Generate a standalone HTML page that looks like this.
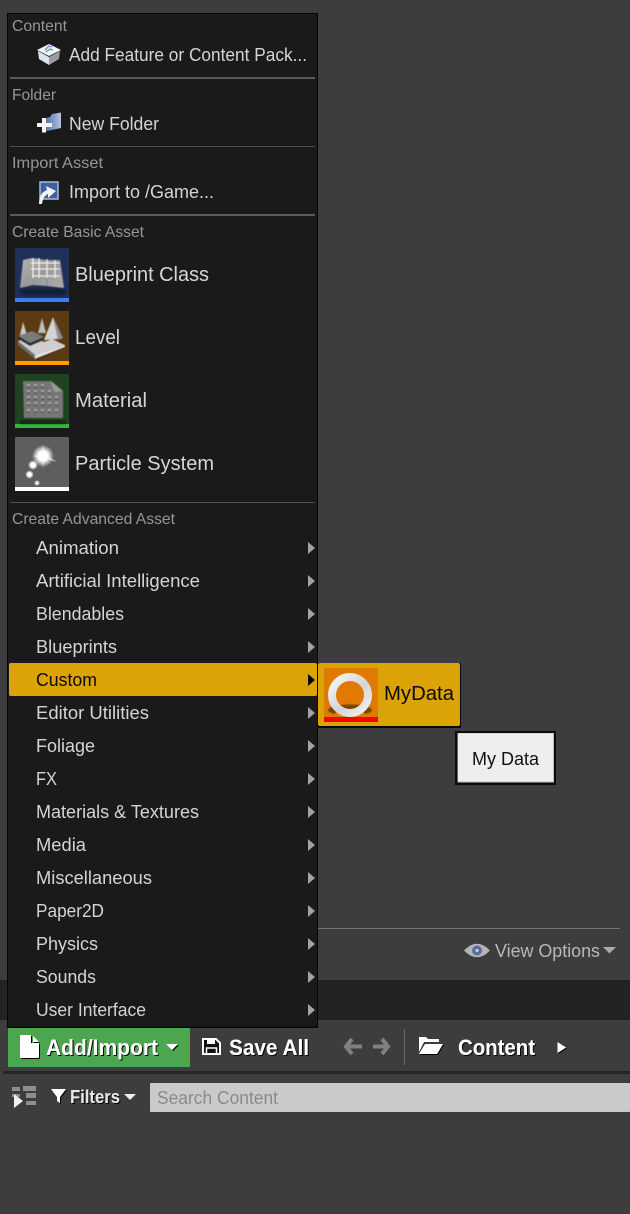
<!DOCTYPE html>
<html><head><meta charset="utf-8"><style>
html,body{margin:0;padding:0;background:#3d3d3d;width:630px;height:1214px;overflow:hidden}
svg{display:block}
text{font-family:"Liberation Sans",sans-serif}
.h{font-size:16px;fill:#969696}
.m{font-size:18.500px;fill:#d4d4d4}
.l{font-size:20.500px;fill:#d6d6d6}
.b{font-size:22px;font-weight:700;fill:#fff}
</style></head><body>
<svg width="630" height="1214" viewBox="0 0 630 1214" xmlns="http://www.w3.org/2000/svg">
<defs>
<linearGradient id="ring" x1="0" y1="0" x2="1" y2="1"><stop offset="0" stop-color="#f7f7f7"/><stop offset=".55" stop-color="#d4d4d8"/><stop offset="1" stop-color="#f2f2f2"/></linearGradient>
<radialGradient id="spark"><stop offset="0" stop-color="#fff"/><stop offset=".45" stop-color="#fff"/><stop offset="1" stop-color="#fff" stop-opacity="0"/></radialGradient>
<linearGradient id="bp" x1="0" y1="0" x2="1" y2="1"><stop offset="0" stop-color="#b4b4b4"/><stop offset=".5" stop-color="#999"/><stop offset="1" stop-color="#aeaeae"/></linearGradient>
<linearGradient id="fold" x1="0" y1="0" x2="1" y2="0"><stop offset="0" stop-color="#3f5f9e"/><stop offset="1" stop-color="#b4c2e4"/></linearGradient>
<filter id="bl" x="-30%" y="-30%" width="160%" height="160%"><feGaussianBlur stdDeviation="1.500"/></filter>
<filter id="s5" x="-20%" y="-20%" width="140%" height="140%"><feGaussianBlur stdDeviation=".5"/></filter>
<filter id="s3" x="-20%" y="-20%" width="140%" height="140%"><feGaussianBlur stdDeviation=".35"/></filter>
<filter id="sh" x="-5%" y="-20%" width="110%" height="140%"><feDropShadow dx="1" dy="1" stdDeviation="0" flood-color="#000"/></filter>
</defs>

<rect width="630" height="1214" fill="#3d3d3d"/>
<rect x="318" y="928" width="302" height="1" fill="#747474"/>
<rect x="0" y="980" width="630" height="40" fill="#232323"/>
<rect x="3" y="1071" width="627" height="3" fill="#252525"/>

<!-- View options -->
<path d="M464 950.500 Q477 937 490 950.500 Q477 964 464 950.500Z" fill="#b5b5b5" filter="url(#s3)"/>
<circle cx="477" cy="950.500" r="5" fill="#5a6f9e"/><circle cx="477" cy="950.500" r="1.500" fill="#cfd6e6"/>
<text x="495" y="957" class="m" style="fill:#b8b8b8" textLength="105" lengthAdjust="spacingAndGlyphs">View Options</text>
<path d="M603 947H616L609.500 953.500Z" fill="#aaa"/>

<!-- Menu -->
<rect x="7" y="13" width="311" height="1015" fill="#050505"/>
<rect x="8" y="14" width="309" height="1012.500" fill="#1a1a1a"/>
<rect x="10" y="77" width="305" height="2" fill="#5a5a5a"/>
<rect x="10" y="146" width="305" height="1" fill="#505050"/>
<rect x="10" y="214" width="305" height="2" fill="#5a5a5a"/>
<rect x="10" y="502" width="305" height="1" fill="#505050"/>

<text x="12" y="31" class="h" textLength="55" lengthAdjust="spacingAndGlyphs">Content</text>
<text x="12" y="100" class="h" textLength="44" lengthAdjust="spacingAndGlyphs">Folder</text>
<text x="12" y="168" class="h" textLength="91" lengthAdjust="spacingAndGlyphs">Import Asset</text>
<text x="12" y="237" class="h" textLength="132" lengthAdjust="spacingAndGlyphs">Create Basic Asset</text>
<text x="12" y="524" class="h" textLength="163" lengthAdjust="spacingAndGlyphs">Create Advanced Asset</text>

<text x="69" y="61" class="m" textLength="238" lengthAdjust="spacingAndGlyphs">Add Feature or Content Pack...</text>
<text x="69" y="130" class="m" textLength="90" lengthAdjust="spacingAndGlyphs">New Folder</text>
<text x="69" y="198" class="m" textLength="145" lengthAdjust="spacingAndGlyphs">Import to /Game...</text>

<!-- cube icon -->
<g filter="url(#s3)">
<path d="M37 50L49 44L61 50L49 56Z" fill="#f2f4f8"/>
<path d="M38 51L49 57V65L39 59Z" fill="#dfe2e8"/>
<path d="M60 51L49 57V65L59 59Z" fill="#9b9da2"/>
<path d="M45 50L49 46L52 47M46 52L50 49L53 50" stroke="#5f8fd4" stroke-width="1.300" fill="none"/>
</g>
<!-- folder icon -->
<g filter="url(#s3)">
<path d="M42 119L50 117L52 114L61 112.500V128L47 131H42Z" fill="url(#fold)"/>
</g>
<path d="M37 123H42V118H46V123H52V127H46V132.500H42V127H37Z" fill="#f4f4f4" filter="url(#s3)"/>
<!-- import icon -->
<g filter="url(#s3)">
<rect x="40" y="182" width="18" height="17" fill="#3f5f9e" stroke="#a9b8d8" stroke-width="1.500"/>
<path d="M39 204Q39 193 47 190L46 186L56 191L48 198L48 194Q43 196 42 204Z" fill="#f2f2f2"/>
</g>

<!-- Blueprint -->
<rect x="15" y="248" width="54" height="50" fill="#1f3158"/>
<rect x="15" y="298" width="54" height="4" fill="#3f7de8"/>
<path d="M19 289H66V295H24Z" fill="#0a1428" opacity=".8" filter="url(#bl)"/>
<g filter="url(#s5)">
<path d="M20 288L23 260L32 258L46 260L60 260L64 288L47 286L33 285Z" fill="url(#bp)"/>
<path d="M47 278L47 286" stroke="#808080" stroke-width="1"/>
<path d="M31 263L60 263M31 269L60 269M32 276L60 276M33 258V278M39 258V278M47 259V278M55 260V278" stroke="#f4f4f4" stroke-width="1.100" fill="none"/>
</g>
<!-- Level -->
<rect x="15" y="311" width="54" height="50" fill="#5a3b13"/>
<rect x="15" y="361" width="54" height="4" fill="#ff9c00"/>
<path d="M30 352L37 360L67 346L60 342Z" fill="#1a1206" opacity=".7" filter="url(#s5)"/>
<g filter="url(#s5)">
<path d="M23 322L20 335H27Z" fill="#c8c8c8"/>
<path d="M42 318L38 333H46Z" fill="#bdbdbd"/>
<path d="M53 317L44 340L58 339Z" fill="#d4d4d4"/>
<path d="M53 317L63 338L58 340Z" fill="#8f8f8f"/>
<path d="M18 341L35 355L65 345L52 339L44 342L32 336Z" fill="#cfcfcf"/>
<path d="M18 341L35 355V359L18 345Z" fill="#6d6d6d"/>
<path d="M35 355L65 345V347L35 359Z" fill="#e2e2e2"/>
<path d="M18 336L32 331L44 337L30 343Z" fill="#7a7a7a"/>
<path d="M18 336L30 343L44 337V340L30 346L18 339Z" fill="#262626"/>
</g>
<!-- Material -->
<rect x="15" y="374" width="54" height="50" fill="#1f4220"/>
<rect x="15" y="424" width="54" height="4" fill="#34b739"/>
<rect x="20" y="420" width="46" height="4" fill="#152b16" filter="url(#s5)"/>
<g filter="url(#s5)">
<path d="M23 381H51L63 391V418H24Z" fill="#767676"/>
<path d="M51 381L63 391L54 392Z" fill="#9a9a9a"/>
<g fill="#a4a4a4">
<rect x="27" y="384" width="3" height="2"/><rect x="34" y="384" width="3" height="2"/><rect x="41" y="384" width="3" height="2"/>
<rect x="27" y="390" width="3" height="2"/><rect x="34" y="390" width="3" height="2"/><rect x="41" y="390" width="3" height="2"/><rect x="48" y="390" width="3" height="2"/>
<rect x="27" y="396" width="3" height="2"/><rect x="34" y="396" width="3" height="2"/><rect x="41" y="396" width="3" height="2"/><rect x="48" y="396" width="3" height="2"/><rect x="55" y="396" width="3" height="2"/>
<rect x="27" y="402" width="3" height="2"/><rect x="34" y="402" width="3" height="2"/><rect x="41" y="402" width="3" height="2"/><rect x="48" y="402" width="3" height="2"/><rect x="55" y="402" width="3" height="2"/>
<rect x="27" y="409" width="3" height="2"/><rect x="34" y="409" width="3" height="2"/><rect x="41" y="409" width="3" height="2"/><rect x="48" y="409" width="3" height="2"/><rect x="55" y="409" width="3" height="2"/>
</g>
<g fill="#565656">
<rect x="27" y="386.500" width="3" height="1.500"/><rect x="34" y="386.500" width="3" height="1.500"/><rect x="41" y="386.500" width="3" height="1.500"/>
<rect x="27" y="392.500" width="3" height="1.500"/><rect x="34" y="392.500" width="3" height="1.500"/><rect x="41" y="392.500" width="3" height="1.500"/><rect x="48" y="392.500" width="3" height="1.500"/>
<rect x="27" y="398.500" width="3" height="1.500"/><rect x="34" y="398.500" width="3" height="1.500"/><rect x="41" y="398.500" width="3" height="1.500"/><rect x="48" y="398.500" width="3" height="1.500"/><rect x="55" y="398.500" width="3" height="1.500"/>
<rect x="27" y="404.500" width="3" height="1.500"/><rect x="34" y="404.500" width="3" height="1.500"/><rect x="41" y="404.500" width="3" height="1.500"/><rect x="48" y="404.500" width="3" height="1.500"/><rect x="55" y="404.500" width="3" height="1.500"/>
<rect x="27" y="411.500" width="3" height="1.500"/><rect x="34" y="411.500" width="3" height="1.500"/><rect x="41" y="411.500" width="3" height="1.500"/><rect x="48" y="411.500" width="3" height="1.500"/><rect x="55" y="411.500" width="3" height="1.500"/>
</g>
</g>
<!-- Particle -->
<rect x="15" y="437" width="54" height="50" fill="#5e5e5e"/>
<rect x="15" y="487" width="54" height="4" fill="#fff"/>
<circle cx="43" cy="456" r="11" fill="url(#spark)"/>
<path d="M43 444L44.500 454L57 462L44 458L43 469L42 458L33 456L42 454Z" fill="#fff" opacity=".6" filter="url(#s3)"/>
<circle cx="33" cy="465" r="5" fill="url(#spark)"/>
<circle cx="29.500" cy="474.500" r="4.300" fill="url(#spark)"/>
<circle cx="37" cy="483" r="3" fill="url(#spark)" opacity=".85"/>

<text x="75" y="281" class="l" textLength="134" lengthAdjust="spacingAndGlyphs">Blueprint Class</text>
<text x="75" y="344" class="l" textLength="45" lengthAdjust="spacingAndGlyphs">Level</text>
<text x="75" y="407" class="l" textLength="72" lengthAdjust="spacingAndGlyphs">Material</text>
<text x="75" y="470" class="l" textLength="139" lengthAdjust="spacingAndGlyphs">Particle System</text>

<!-- Highlight -->
<rect x="9" y="663" width="308" height="33" rx="2" fill="#dca307"/>

<text x="36" y="554" class="m" textLength="83" lengthAdjust="spacingAndGlyphs">Animation</text>
<text x="36" y="587" class="m" textLength="164" lengthAdjust="spacingAndGlyphs">Artificial Intelligence</text>
<text x="36" y="620" class="m" textLength="88" lengthAdjust="spacingAndGlyphs">Blendables</text>
<text x="36" y="653" class="m" textLength="81" lengthAdjust="spacingAndGlyphs">Blueprints</text>
<text x="36" y="686" class="m" style="fill:#0a0a0a" textLength="61" lengthAdjust="spacingAndGlyphs">Custom</text>
<text x="36" y="719" class="m" textLength="113" lengthAdjust="spacingAndGlyphs">Editor Utilities</text>
<text x="36" y="752" class="m" textLength="59" lengthAdjust="spacingAndGlyphs">Foliage</text>
<text x="36" y="785" class="m" textLength="21" lengthAdjust="spacingAndGlyphs">FX</text>
<text x="36" y="818" class="m" textLength="163" lengthAdjust="spacingAndGlyphs">Materials &amp; Textures</text>
<text x="36" y="851" class="m" textLength="50" lengthAdjust="spacingAndGlyphs">Media</text>
<text x="36" y="884" class="m" textLength="116" lengthAdjust="spacingAndGlyphs">Miscellaneous</text>
<text x="36" y="917" class="m" textLength="68" lengthAdjust="spacingAndGlyphs">Paper2D</text>
<text x="36" y="950" class="m" textLength="62" lengthAdjust="spacingAndGlyphs">Physics</text>
<text x="36" y="983" class="m" textLength="60" lengthAdjust="spacingAndGlyphs">Sounds</text>
<text x="36" y="1016" class="m" textLength="110" lengthAdjust="spacingAndGlyphs">User Interface</text>

<!-- arrows -->
<g fill="#a2a2a2">
<path d="M308 542L315 548L308 554Z"/><path d="M308 575L315 581L308 587Z"/><path d="M308 608L315 614L308 620Z"/><path d="M308 641L315 647L308 653Z"/>
<path d="M308 674L315 680L308 686Z" fill="#050505"/>
<path d="M308 707L315 713L308 719Z"/><path d="M308 740L315 746L308 752Z"/><path d="M308 773L315 779L308 785Z"/><path d="M308 806L315 812L308 818Z"/><path d="M308 839L315 845L308 851Z"/><path d="M308 872L315 878L308 884Z"/><path d="M308 905L315 911L308 917Z"/><path d="M308 938L315 944L308 950Z"/><path d="M308 971L315 977L308 983Z"/><path d="M308 1004L315 1010L308 1016Z"/>
</g>

<!-- Submenu -->
<rect x="317" y="663" width="144" height="65" fill="#0a0a0a"/>
<rect x="318" y="663" width="142" height="63" rx="2" fill="#dca307"/>
<rect x="324" y="668" width="54" height="49" fill="#e07a03"/>
<ellipse cx="350" cy="710" rx="22" ry="5.500" fill="#7a4504" filter="url(#s5)"/>
<ellipse cx="350" cy="714" rx="15" ry="5" fill="#e07a03"/>
<circle cx="350" cy="695" r="18" fill="none" stroke="url(#ring)" stroke-width="8"/>
<rect x="324" y="717" width="54" height="5" fill="#fb0000"/>
<text x="384" y="700" class="l" style="fill:#0a0a0a" textLength="70" lengthAdjust="spacingAndGlyphs">MyData</text>

<!-- Tooltip -->
<rect x="455" y="731" width="101" height="54" fill="#0b0b0b"/>
<rect x="457.500" y="733" width="96.500" height="49.500" fill="#bdbdbd"/>
<rect x="458" y="733.500" width="95" height="48" fill="#eeeeee"/>
<text x="472" y="765" style="font-size:18.500px;fill:#111" textLength="67" lengthAdjust="spacingAndGlyphs">My Data</text>

<!-- Toolbar -->
<rect x="8" y="1028" width="182" height="39" rx="1" fill="#4ba64f"/>
<g filter="url(#sh)">
<path d="M21 1035H31V1043H39V1057Q39 1058 38 1058H21Q20 1058 20 1057V1036Q20 1035 21 1035Z" fill="#fff"/>
<path d="M33 1036L39 1042H33Z" fill="#fff"/>
</g>
<text x="46" y="1055" class="b" filter="url(#sh)" textLength="112" lengthAdjust="spacingAndGlyphs">Add/Import</text>
<path d="M166 1044H178L172 1050Z" fill="#fff" filter="url(#sh)"/>
<path d="M203 1039H216L220 1043V1054H203Z" fill="#111" stroke="#fff" stroke-width="2"/>
<rect x="207" y="1038" width="8" height="6" fill="#fff"/><rect x="206.500" y="1048" width="10" height="6" fill="none" stroke="#fff" stroke-width="1.500"/>
<text x="229" y="1055" class="b" filter="url(#sh)" textLength="80" lengthAdjust="spacingAndGlyphs">Save All</text>
<path d="M352 1039L346 1046.500L352 1054M346 1046.500H362" fill="none" stroke="#808080" stroke-width="4"/>
<path d="M382 1039L388 1046.500L382 1054M388 1046.500H373" fill="none" stroke="#808080" stroke-width="4"/>
<rect x="404" y="1029" width="1" height="36" fill="#6a6a6a"/>
<path d="M419 1052V1037H426L428 1039H439V1042H424L419 1052Z" fill="#fff"/>
<path d="M425 1044H443L437 1054H419Z" fill="#fff" filter="url(#sh)"/>
<text x="458" y="1055" class="b" filter="url(#sh)" textLength="77" lengthAdjust="spacingAndGlyphs">Content</text>
<path d="M557.500 1042L566 1047.500L557.500 1053Z" fill="#fff" filter="url(#sh)"/>

<!-- Filter row -->
<g fill="#8e8e8e">
<rect x="12" y="1087" width="8" height="4"/><rect x="23" y="1086" width="13" height="5"/>
<rect x="26" y="1093" width="10" height="5"/><rect x="26" y="1101" width="10" height="4"/>
<rect x="12" y="1094" width="8" height="3"/>
</g>
<path d="M14 1094L23 1101L14 1108Z" fill="#f2f2f2"/>
<path d="M51 1089H66L60 1097V1103L57 1101V1097Z" fill="#fff" filter="url(#sh)"/>
<text x="70" y="1103" style="font-size:18px;font-weight:700;fill:#e6e6e6" filter="url(#sh)" textLength="50" lengthAdjust="spacingAndGlyphs">Filters</text>
<path d="M124 1094H136L130 1100Z" fill="#eee"/>
<rect x="150" y="1083" width="480" height="29" rx="1" fill="#cacaca"/>
<text x="157" y="1104" style="font-size:18.500px;fill:#8a8a8a" textLength="121" lengthAdjust="spacingAndGlyphs">Search Content</text>
</svg>
</body></html>
